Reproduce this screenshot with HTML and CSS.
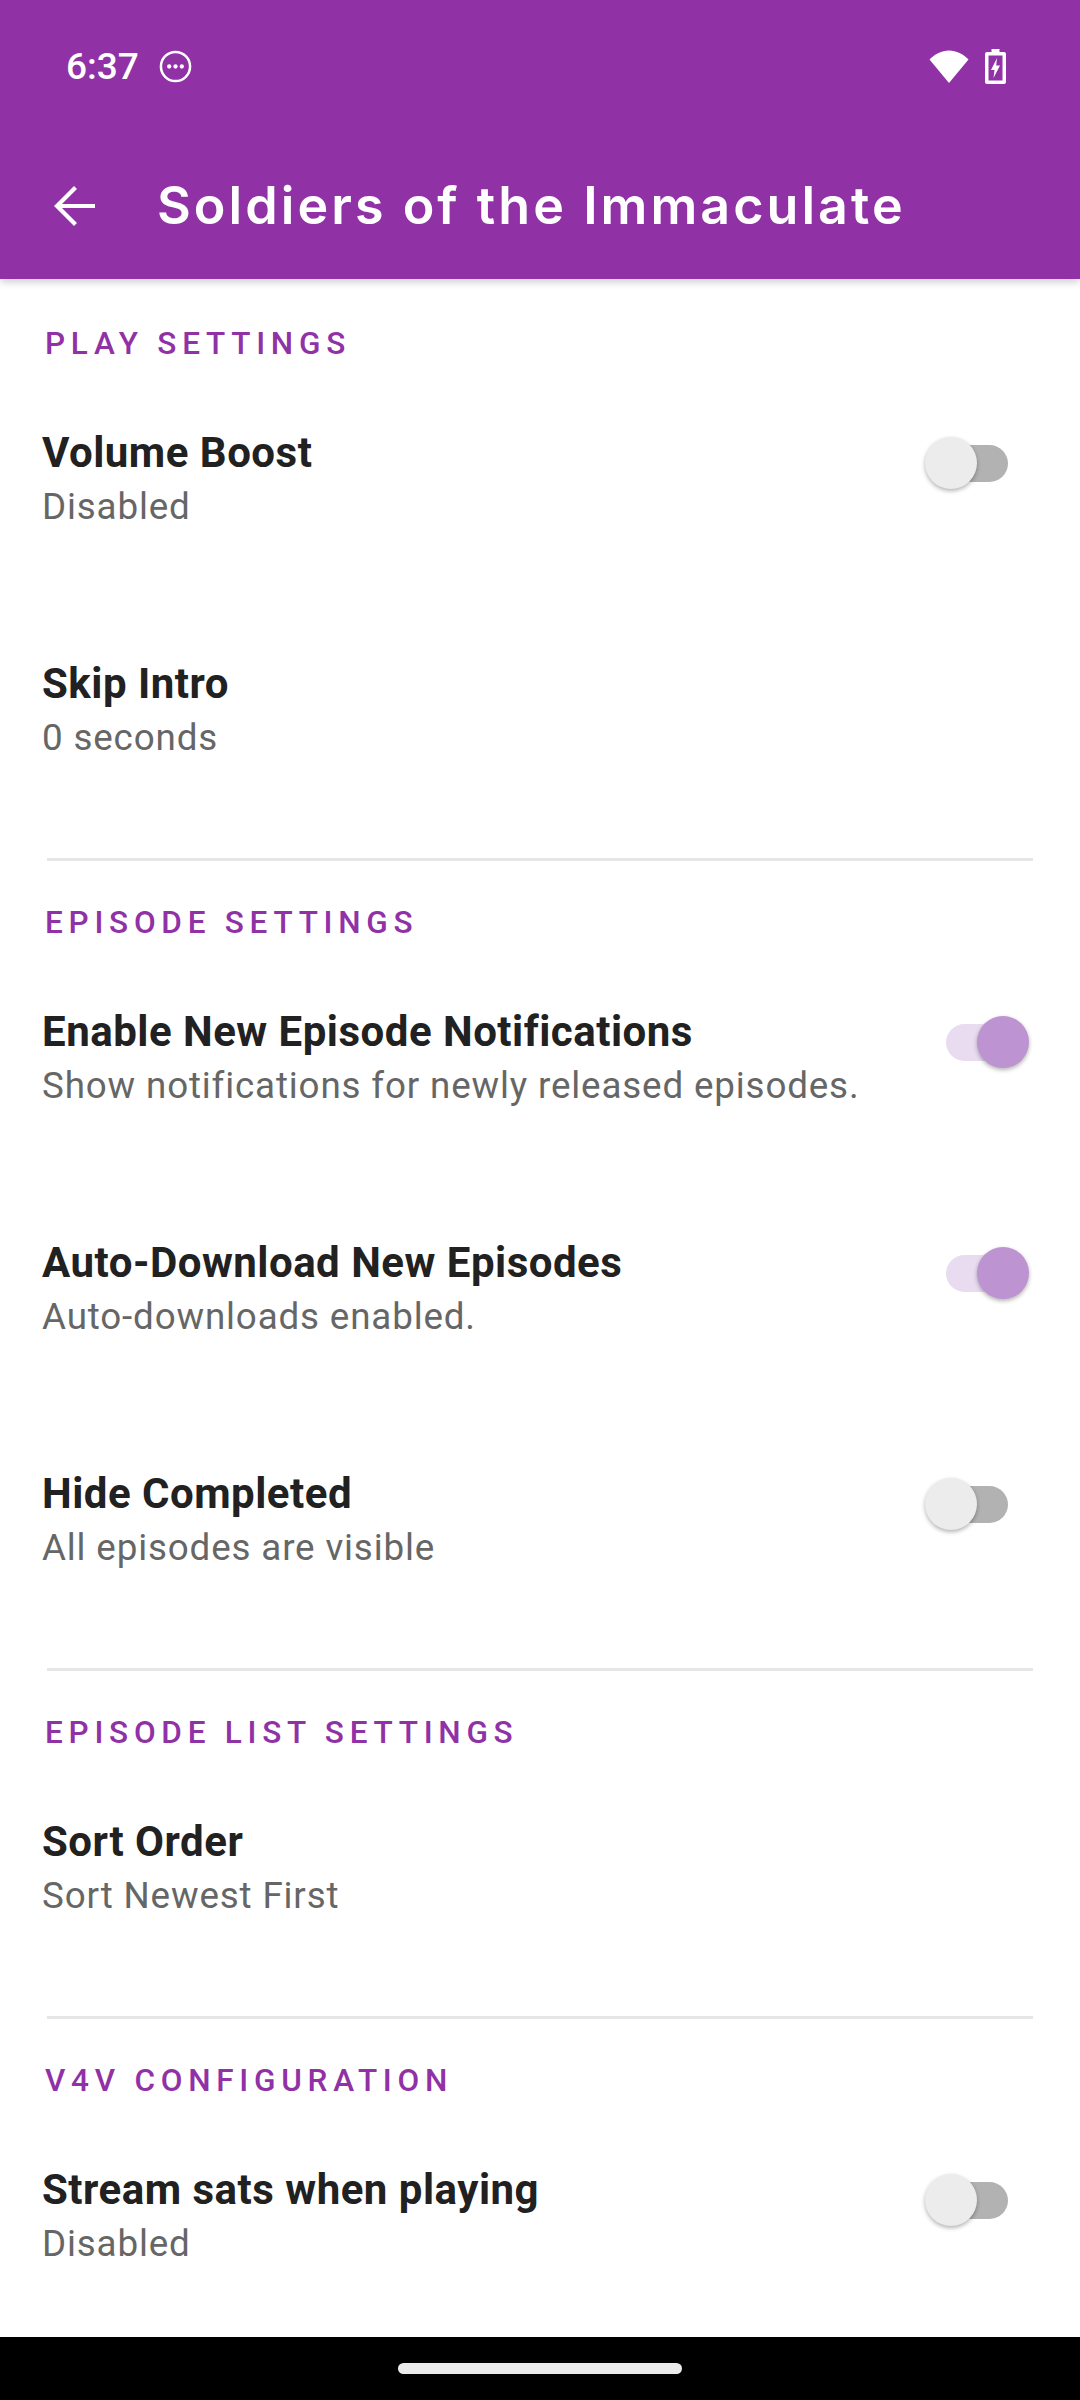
FILE: index.html
```html
<!DOCTYPE html>
<html lang="en">
<head>
    <meta charset="UTF-8">
    <meta name="viewport" content="width=device-width, initial-scale=1.0">
    <title>Soldiers of the Immaculate - Settings</title>
    <link rel="stylesheet" href="styles.css">
</head>
<body>
    <div class="phone">
        <header class="app-bar">
            <div class="status-bar">
                <div class="status-left">
                    <span class="clock">6:37</span>
                    <svg class="dots-icon" width="33" height="33" viewBox="0 0 34 34">
                        <circle cx="17" cy="17" r="15" fill="none" stroke="#fff" stroke-width="2.6"/>
                        <circle cx="10.5" cy="17" r="2.2" fill="#fff"/>
                        <circle cx="17" cy="17" r="2.2" fill="#fff"/>
                        <circle cx="23.5" cy="17" r="2.2" fill="#fff"/>
                    </svg>
                </div>
                <div class="status-right">
                    <svg width="40" height="33" viewBox="0 0 40 33">
                        <path d="M0.500 9.500C6 4 12.500 0.500 20 0.500s14 3.500 19.500 9L20 33z" fill="#fff"/>
                    </svg>
                    <svg width="21" height="35" viewBox="0 0 21 35">
                        <path d="M6.500 0h8v3H19a2 2 0 0 1 2 2v28a2 2 0 0 1-2 2H2a2 2 0 0 1-2-2V5a2 2 0 0 1 2-2h4.500zM3.500 6.500v25h14v-25z" fill="#fff" fill-rule="evenodd"/>
                        <path d="M12 9 6 21h3.500l-1 8 6.500-12.500h-3.800z" fill="#fff"/>
                    </svg>
                </div>
            </div>
            <div class="toolbar">
                <svg class="back-icon" width="48" height="46" viewBox="0 0 48 46">
                    <path d="M46 23H8M26.500 4.500 8 23 26.500 41.500" fill="none" stroke="#fff" stroke-width="4.200"/>
                </svg>
                <h1>Soldiers of the Immaculate</h1>
            </div>
        </header>

        <main class="settings">
            <section class="group">
                <h2>Play Settings</h2>
                <div class="row">
                    <div class="row-text">
                        <div class="row-title">Volume Boost</div>
                        <div class="row-sub">Disabled</div>
                    </div>
                    <div class="switch"><span class="thumb"></span></div>
                </div>
                <div class="row">
                    <div class="row-text">
                        <div class="row-title">Skip Intro</div>
                        <div class="row-sub">0 seconds</div>
                    </div>
                </div>
            </section>

            <section class="group">
                <h2>Episode Settings</h2>
                <div class="row">
                    <div class="row-text">
                        <div class="row-title">Enable New Episode Notifications</div>
                        <div class="row-sub">Show notifications for newly released episodes.</div>
                    </div>
                    <div class="switch on"><span class="thumb"></span></div>
                </div>
                <div class="row">
                    <div class="row-text">
                        <div class="row-title">Auto-Download New Episodes</div>
                        <div class="row-sub">Auto-downloads enabled.</div>
                    </div>
                    <div class="switch on"><span class="thumb"></span></div>
                </div>
                <div class="row">
                    <div class="row-text">
                        <div class="row-title">Hide Completed</div>
                        <div class="row-sub">All episodes are visible</div>
                    </div>
                    <div class="switch"><span class="thumb"></span></div>
                </div>
            </section>

            <section class="group">
                <h2>Episode List Settings</h2>
                <div class="row">
                    <div class="row-text">
                        <div class="row-title">Sort Order</div>
                        <div class="row-sub">Sort Newest First</div>
                    </div>
                </div>
            </section>

            <section class="group">
                <h2>V4V Configuration</h2>
                <div class="row">
                    <div class="row-text">
                        <div class="row-title">Stream sats when playing</div>
                        <div class="row-sub">Disabled</div>
                    </div>
                    <div class="switch"><span class="thumb"></span></div>
                </div>
            </section>
        </main>

        <footer class="nav-bar">
            <div class="nav-pill"></div>
        </footer>
    </div>
</body>
</html>
```
FILE: styles.css
```css
* {
    margin: 0;
    padding: 0;
    box-sizing: border-box;
}

body {
    font-family: Roboto, 'Liberation Sans', sans-serif;
    background-color: #ffffff;
}

.phone {
    width: 1080px;
    height: 2400px;
    display: flex;
    flex-direction: column;
    overflow: hidden;
}

.app-bar {
    height: 279px;
    background-color: #9031a6;
    color: white;
    box-shadow: 0 3px 8px rgba(0, 0, 0, 0.2);
    position: relative;
    z-index: 1;
    flex-shrink: 0;
}

.status-bar {
    height: 132px;
    padding: 0 74px 0 66px;
    display: flex;
    justify-content: space-between;
    align-items: center;
}

.status-left,
.status-right {
    display: flex;
    align-items: center;
}

.clock {
    font-size: 37px;
    font-weight: 500;
}

.dots-icon {
    margin-left: 20px;
}

.status-right {
    gap: 16px;
}

.toolbar {
    height: 147px;
    display: flex;
    align-items: center;
    padding-left: 49px;
}

.toolbar h1 {
    margin-left: 60px;
    font-family: Inter, sans-serif;
    font-size: 52px;
    font-weight: 600;
    letter-spacing: 3.05px;
    white-space: nowrap;
}

.settings {
    flex: 1;
    overflow: hidden;
}

.group {
    position: relative;
    padding: 45px 0 32px;
}

.group + .group::before {
    content: "";
    display: block;
    position: absolute;
    top: 0;
    left: 47px;
    right: 47px;
    height: 3px;
    background-color: #e6e6e6;
}

.group h2 {
    padding-left: 45px;
    font-size: 31.5px;
    line-height: 40px;
    font-weight: 500;
    letter-spacing: 5.75px;
    text-transform: uppercase;
    color: #9031a6;
}

.row {
    height: 231px;
    display: flex;
    justify-content: space-between;
    padding: 63px 0 0 42px;
}

.row-title {
    font-size: 42px;
    line-height: 52px;
    font-weight: 700;
    letter-spacing: 0.5px;
    color: #212121;
}

.row-sub {
    margin-top: 2px;
    font-size: 36.75px;
    line-height: 52px;
    letter-spacing: 0.85px;
    color: #666666;
}

.switch {
    position: relative;
    width: 74px;
    height: 37px;
    margin: 18px 72px 0 0;
    border-radius: 19px;
    background-color: #b2b2b2;
}

.switch.on {
    margin-right: 60px;
    background-color: #e9dcf1;
}

.thumb {
    position: absolute;
    top: -8px;
    left: -9px;
    width: 52px;
    height: 52px;
    border-radius: 50%;
    background-color: #ececec;
    box-shadow: 0 2px 4px rgba(0, 0, 0, 0.3);
}

.switch.on .thumb {
    left: 31px;
    background-color: #be93d2;
}

.nav-bar {
    height: 63px;
    background-color: black;
    flex-shrink: 0;
    display: flex;
    justify-content: center;
    padding-top: 26px;
}

.nav-pill {
    width: 284px;
    height: 11px;
    border-radius: 6px;
    background-color: #ececec;
}
```
